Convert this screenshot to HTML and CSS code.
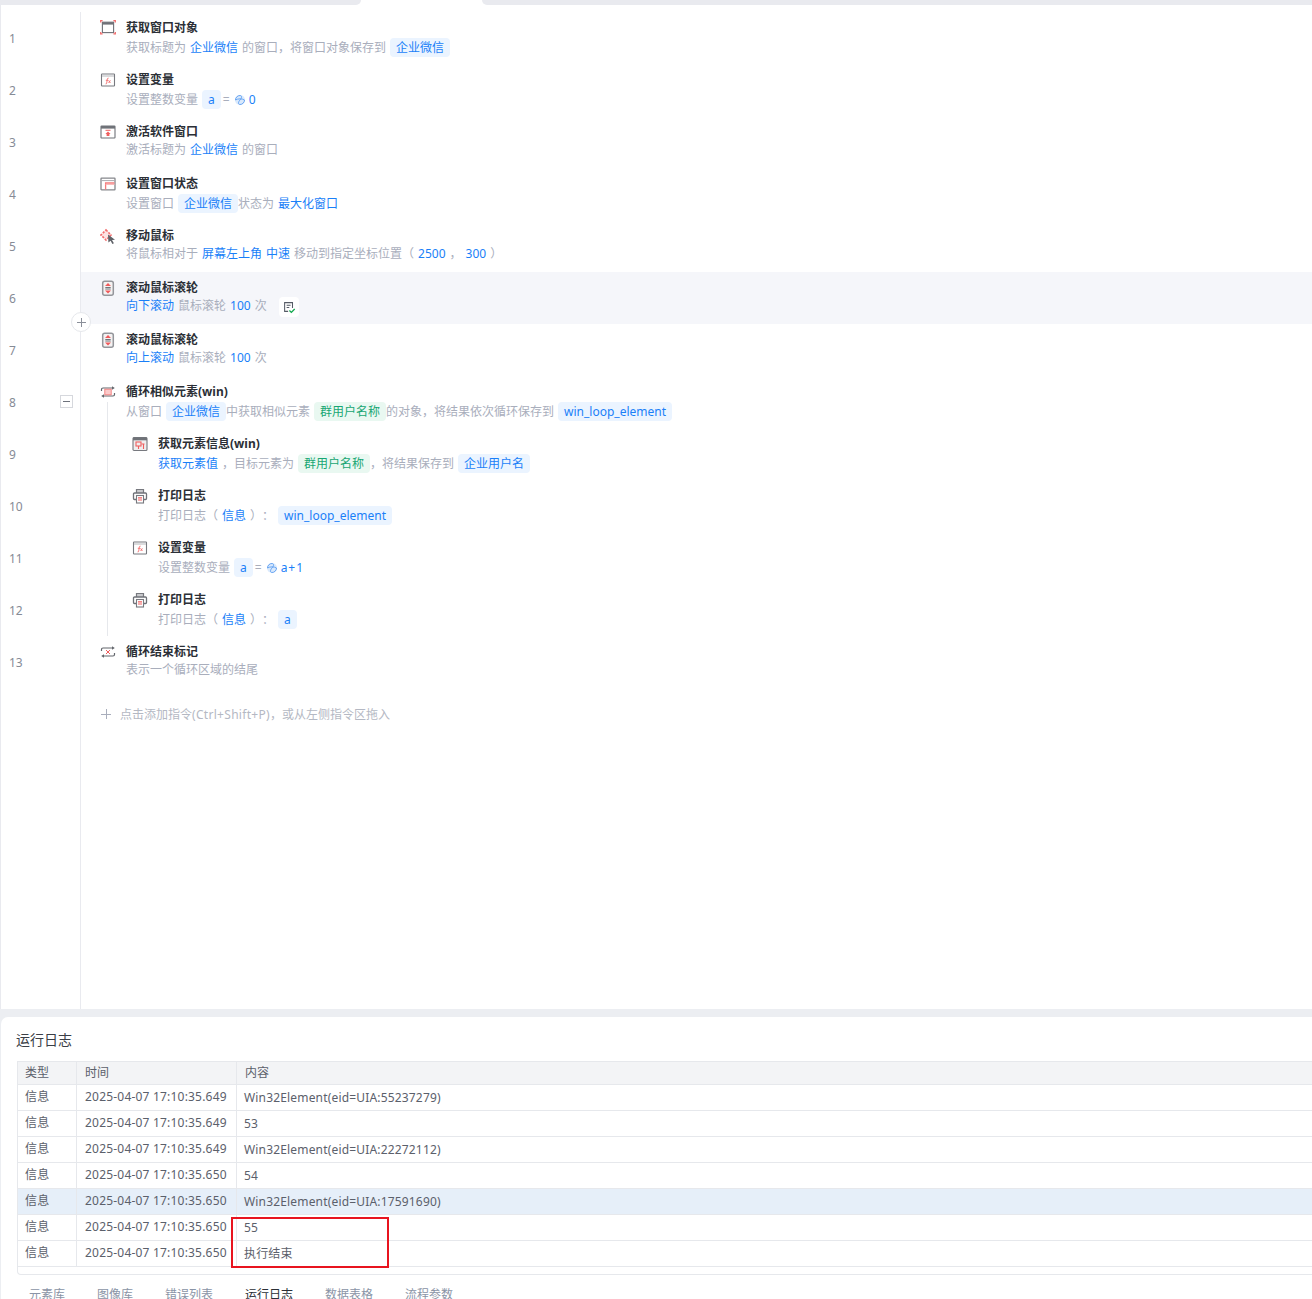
FILE: index.html
```html
<!DOCTYPE html>
<html lang="zh-CN">
<head>
<meta charset="utf-8">
<title>流程编辑器</title>
<link rel="stylesheet" href="styles.css">
</head>
<body>
<svg class="sprite" xmlns="http://www.w3.org/2000/svg">
  <symbol id="i-win" viewBox="0 0 16 16"><rect x="2.400" y="2.200" width="11.200" height="10.400" fill="none" stroke="#6f7278" stroke-width="1.100"/><rect x="2.400" y="2.200" width="11.200" height="2.400" fill="#6f7278"/><g fill="none" stroke="#f26d6d" stroke-width="1.300"><path d="M.7 2.600V.7h1.900M13.400 .7h1.900v1.900M.7 12v1.900h1.900M13.400 13.900h1.900V12"/></g></symbol>
  <symbol id="i-var" viewBox="0 0 16 16"><rect x="1.500" y="2" width="13" height="12" rx=".6" fill="none" stroke="#77797f" stroke-width="1.100"/><path d="M2 4h12" stroke="#b5b6ba" stroke-width="1"/><path d="M8.600 6.200c-1-.3-1.200.3-1.300 1l-.6 4c-.1.600-.5.900-1.100.7M5.800 8.300h2.400M8.600 8.400l1.800 2.600M10.400 8.400l-1.800 2.600" fill="none" stroke="#f26d6d" stroke-width=".9"/></symbol>
  <symbol id="i-act" viewBox="0 0 16 16"><rect x="1" y="2" width="14" height="12" rx=".6" fill="none" stroke="#6f7278" stroke-width="1.100"/><rect x="1" y="2" width="14" height="2.600" fill="#6f7278"/><path d="M5.500 6.300h5" stroke="#ef5f5f" stroke-width="1"/><path d="M8 7.400l2.600 2.600H9.400v2H6.600v-2H5.400z" fill="#ef5f5f"/></symbol>
  <symbol id="i-state" viewBox="0 0 16 16"><rect x="1" y="2.200" width="14" height="11.600" rx=".6" fill="none" stroke="#85878c" stroke-width="1.300"/><path d="M1.500 4.600h13" stroke="#a9abaf" stroke-width="1"/><path d="M5.600 13.400V7h8.800" fill="none" stroke="#f47c7c" stroke-width="1.300"/><path d="M5.600 8.400h8.800" stroke="#f9b4b4" stroke-width="1"/></symbol>
  <symbol id="i-move" viewBox="0 0 16 16"><path d="M6 2l5 5-5 5-5-5z" fill="#fde3e3" stroke="#f26d6d" stroke-width="1.600" stroke-dasharray="2.200 1.200"/><path d="M8 6.500l7 5.200-3 .4 1.900 3.200-1.500.7-1.800-3.300-2.200 1.800z" fill="#5f6268"/></symbol>
  <symbol id="i-wheel" viewBox="0 0 16 16"><rect x="2.700" y="1.200" width="10.600" height="14" rx="2" fill="#f4f2f2" stroke="#94969b" stroke-width="1.500"/><path d="M5.300 7.500h5.400M5.300 9h5.400" stroke="#63666c" stroke-width=".9"/><path d="M8 3l3 3H5zM8 13.500l3-3H5z" fill="#f0595a"/></symbol>
  <symbol id="i-loop" viewBox="0 0 16 16"><path d="M1.500 7V5.500a1.500 1.500 0 0 1 1.500-1.500h10M14.500 9v1.500A1.500 1.500 0 0 1 13 12H3" fill="none" stroke="#63666c" stroke-width="1.200"/><path d="M12 2.200l2.800 1.800-2.800 1.800zM4 10.200L1.200 12 4 13.800z" fill="#63666c"/><rect x="4.800" y="5.200" width="6.400" height="5.600" fill="#fbcaca" stroke="#f27c7c" stroke-width=".9"/></symbol>
  <symbol id="i-info" viewBox="0 0 16 16"><rect x="1" y="1.500" width="14" height="13" rx="1" fill="#efeeee" stroke="#77797f" stroke-width="1.100"/><rect x="1" y="1.500" width="14" height="2.800" fill="#6f7278"/><rect x="4" y="6" width="5" height="4" fill="none" stroke="#ef5f5f" stroke-width="1.100"/><path d="M6.500 10v3M9.500 8h3M11.500 8v5" stroke="#ef5f5f" stroke-width="1.100"/></symbol>
  <symbol id="i-print" viewBox="0 0 16 16"><path d="M4.500 5V1.500h7V5" fill="#c9cacd" stroke="#77797f" stroke-width="1.200"/><path d="M4 11.500H2.500a1 1 0 0 1-1-1V6a1 1 0 0 1 1-1h11a1 1 0 0 1 1 1v4.500a1 1 0 0 1-1 1H12" fill="none" stroke="#6f7278" stroke-width="1.300"/><rect x="4.500" y="7.500" width="7" height="7.500" fill="#fff" stroke="#77797f" stroke-width="1.100"/><path d="M6 9.800h4M6 12h4" stroke="#ef5f5f" stroke-width="1.200"/></symbol>
  <symbol id="i-end" viewBox="0 0 16 16"><path d="M1.500 7V5.500a1.500 1.500 0 0 1 1.500-1.500h10M14.500 9v1.500A1.500 1.500 0 0 1 13 12H3" fill="none" stroke="#63666c" stroke-width="1.200"/><path d="M12 2.200l2.800 1.800-2.800 1.800zM4 10.200L1.200 12 4 13.800z" fill="#63666c"/><path d="M6 6l4 4M10 6l-4 4" stroke="#ef5f5f" stroke-width="1"/></symbol>
  <symbol id="i-expr" viewBox="0 0 12 12"><circle cx="6" cy="6" r="5" fill="#d9e9fc"/><path d="M1.500 6a4.500 4.500 0 0 1 4.500-4.500c2 0 2 2.500 0 4.500s-2 4.500 0 4.500a4.500 4.500 0 0 0 4.500-4.500c-2-1.500-7-1.500-9 0z" fill="none" stroke="#5b9df0" stroke-width=".9"/></symbol>
  <symbol id="i-note" viewBox="0 0 16 16"><path d="M7 13H3V3h9v6" fill="none" stroke="#565b66" stroke-width="1.200"/><path d="M5.300 6h4.500M5.300 8.500h3" stroke="#565b66" stroke-width="1.200"/><path d="M8.500 12l2.200 2.200 3.800-4" fill="none" stroke="#12a84e" stroke-width="1.500"/></symbol>
</svg>

<div class="tabstrip"><div class="seg seg-left"></div><div class="seg-active"></div><div class="seg seg-right"></div></div>

<div class="editor">
  <div class="lines">
    <div class="line">1</div>
    <div class="line">2</div>
    <div class="line">3</div>
    <div class="line">4</div>
    <div class="line">5</div>
    <div class="line">6</div>
    <div class="line">7</div>
    <div class="line">8<span class="fold"></span></div>
    <div class="line">9</div>
    <div class="line">10</div>
    <div class="line">11</div>
    <div class="line">12</div>
    <div class="line">13</div>
  </div>
  <div class="main">
    <div class="row">
      <svg class="icon"><use href="#i-win"/></svg>
      <div class="txt"><div class="title">获取窗口对象</div>
      <div class="sub">获取标题为<span class="lk">企业微信</span>的窗口，将窗口对象保存到<span class="pill">企业微信</span></div></div>
    </div>
    <div class="row">
      <svg class="icon"><use href="#i-var"/></svg>
      <div class="txt"><div class="title">设置变量</div>
      <div class="sub">设置整数变量<span class="pill">a</span><span class="eq">=</span><svg class="expr"><use href="#i-expr"/></svg><span class="val">0</span></div></div>
    </div>
    <div class="row">
      <svg class="icon"><use href="#i-act"/></svg>
      <div class="txt"><div class="title">激活软件窗口</div>
      <div class="sub">激活标题为<span class="lk">企业微信</span>的窗口</div></div>
    </div>
    <div class="row">
      <svg class="icon"><use href="#i-state"/></svg>
      <div class="txt"><div class="title">设置窗口状态</div>
      <div class="sub">设置窗口<span class="pill">企业微信</span>状态为<span class="lk">最大化窗口</span></div></div>
    </div>
    <div class="row">
      <svg class="icon"><use href="#i-move"/></svg>
      <div class="txt"><div class="title">移动鼠标</div>
      <div class="sub">将鼠标相对于<span class="lk">屏幕左上角</span><span class="lk lk-next">中速</span>移动到指定坐标位置（<span class="lk">2500</span>，<span class="lk">300</span>）</div></div>
    </div>
    <div class="row row-active">
      <svg class="icon"><use href="#i-wheel"/></svg>
      <div class="txt"><div class="title">滚动鼠标滚轮</div>
      <div class="sub"><span class="lk lk-first">向下滚动</span>鼠标滚轮<span class="lk">100</span>次<span class="note"><svg class="note-icon"><use href="#i-note"/></svg></span></div></div>
      <button class="add" type="button"></button>
    </div>
    <div class="row">
      <svg class="icon"><use href="#i-wheel"/></svg>
      <div class="txt"><div class="title">滚动鼠标滚轮</div>
      <div class="sub"><span class="lk lk-first">向上滚动</span>鼠标滚轮<span class="lk">100</span>次</div></div>
    </div>
    <div class="row">
      <svg class="icon"><use href="#i-loop"/></svg>
      <div class="txt"><div class="title">循环相似元素(win)</div>
      <div class="sub">从窗口<span class="pill">企业微信</span>中获取相似元素<span class="pill pill-green">群用户名称</span>的对象，将结果依次循环保存到<span class="pill">win_loop_element</span></div></div>
    </div>
    <div class="nested">
      <div class="row">
        <svg class="icon"><use href="#i-info"/></svg>
        <div class="txt"><div class="title">获取元素信息(win)</div>
        <div class="sub"><span class="lk lk-first">获取元素值</span>，目标元素为<span class="pill pill-green">群用户名称</span>，将结果保存到<span class="pill">企业用户名</span></div></div>
      </div>
      <div class="row">
        <svg class="icon"><use href="#i-print"/></svg>
        <div class="txt"><div class="title">打印日志</div>
        <div class="sub">打印日志（<span class="lk">信息</span>）：<span class="pill">win_loop_element</span></div></div>
      </div>
      <div class="row">
        <svg class="icon"><use href="#i-var"/></svg>
        <div class="txt"><div class="title">设置变量</div>
        <div class="sub">设置整数变量<span class="pill">a</span><span class="eq">=</span><svg class="expr"><use href="#i-expr"/></svg><span class="val">a+1</span></div></div>
      </div>
      <div class="row">
        <svg class="icon"><use href="#i-print"/></svg>
        <div class="txt"><div class="title">打印日志</div>
        <div class="sub">打印日志（<span class="lk">信息</span>）：<span class="pill">a</span></div></div>
      </div>
    </div>
    <div class="row">
      <svg class="icon"><use href="#i-end"/></svg>
      <div class="txt"><div class="title">循环结束标记</div>
      <div class="sub">表示一个循环区域的结尾</div></div>
    </div>
    <div class="hint"><span class="hint-plus"></span><span>点击添加指令<span class="hint-key">(Ctrl+Shift+P)</span>，或从左侧指令区拖入</span></div>
  </div>
</div>

<div class="panel">
  <div class="panel-title">运行日志</div>
  <div class="log">
    <table class="log-table">
      <colgroup><col class="c1"><col class="c2"><col></colgroup>
      <thead><tr><th>类型</th><th>时间</th><th>内容</th></tr></thead>
      <tbody>
        <tr><td>信息</td><td>2025-04-07 17:10:35.649</td><td class="msg">Win32Element(eid=UIA:55237279)</td></tr>
        <tr><td>信息</td><td>2025-04-07 17:10:35.649</td><td class="msg">53</td></tr>
        <tr><td>信息</td><td>2025-04-07 17:10:35.649</td><td class="msg">Win32Element(eid=UIA:22272112)</td></tr>
        <tr><td>信息</td><td>2025-04-07 17:10:35.650</td><td class="msg">54</td></tr>
        <tr class="sel"><td>信息</td><td>2025-04-07 17:10:35.650</td><td class="msg">Win32Element(eid=UIA:17591690)</td></tr>
        <tr><td>信息</td><td>2025-04-07 17:10:35.650</td><td class="msg">55</td></tr>
        <tr><td>信息</td><td>2025-04-07 17:10:35.650</td><td class="msg">执行结束</td></tr>
      </tbody>
    </table>
    <div class="log-tail"></div>
    <div class="mark"></div>
  </div>
  <div class="bottom-tabs">
    <span class="btab">元素库</span><span class="btab">图像库</span><span class="btab">错误列表</span><span class="btab btab-on">运行日志</span><span class="btab">数据表格</span><span class="btab">流程参数</span>
  </div>
</div>
</body>
</html>
```

FILE: styles.css
```css
* { box-sizing: border-box; }
html, body { margin: 0; padding: 0; }
body {
  width: 1312px;
  height: 1299px;
  overflow: hidden;
  background: #fff;
  font-family: "Noto Sans", "Noto Sans CJK SC", sans-serif;
  font-size: 12px;
  color: #2b2f36;
  text-spacing-trim: space-all;
}
.sprite { display: none; }

.tabstrip { display: flex; height: 5px; }
.seg { background: #e9eaef; }
.seg-left { width: 361px; border-bottom-right-radius: 6px; }
.seg-active { width: 121px; background: #fff; }
.seg-right { flex: 1; border-bottom-left-radius: 6px; }

.editor {
  display: flex;
  height: 1004px;
  padding-top: 7px;
  border-left: 1px solid #e9eaef;
}
.lines { width: 80px; flex: none; border-right: 1px solid #e9eaef; }
.line {
  height: 52px;
  padding: 2px 7px 0 8px;
  display: flex;
  align-items: center;
  justify-content: space-between;
  color: #868b96;
  line-height: 18px;
}
.fold {
  position: relative;
  width: 13px;
  height: 13px;
  margin-bottom: 4px;
  border: 1px solid #d6d8dd;
  background: #fff;
}
.fold::after {
  content: "";
  position: absolute;
  left: 2px;
  top: 5px;
  width: 7px;
  height: 1px;
  background: #6e727c;
}

.main { flex: 1; min-width: 0; }
.row {
  position: relative;
  display: flex;
  height: 52px;
  padding: 7px 0 0 19px;
  gap: 10px;
}
.row-active { background: #f5f6fa; }
.icon { width: 16px; height: 16px; flex: none; margin-top: 1px; }
.title { height: 18px; line-height: 18px; font-weight: 700; color: #2b2f36; }
.sub {
  display: flex;
  align-items: center;
  min-height: 18px;
  line-height: 18px;
  white-space: nowrap;
  color: #a9aebc;
}
.lk { margin: 0 4px; color: #1a7ff8; }
.lk-first { margin-left: 0; }
.lk-next { margin-left: 0; }
.pill {
  height: 19px;
  margin: 1px 0 1px 4px;
  padding: 0 6px;
  line-height: 19px;
  border-radius: 4px;
  background: #ebf4ff;
  color: #1a7ff8;
}
.pill-green { background: #e9f8f1; color: #17a673; }
.eq { margin: 0 4px 0 2px; }
.expr { width: 12px; height: 12px; margin-right: 3px; }
.val { color: #1a7ff8; letter-spacing: 1px; }
.note {
  display: flex;
  align-items: center;
  justify-content: center;
  width: 20px;
  height: 20px;
  margin: 0 0 -2px 12px;
  border-radius: 4px;
  background: #fff;
}
.note-icon { width: 14px; height: 14px; }
.add {
  position: absolute;
  left: -10px;
  bottom: -8px;
  z-index: 2;
  width: 20px;
  height: 20px;
  padding: 0;
  border: 1px solid #e6e8ec;
  border-radius: 50%;
  background: #fff;
}
.add::before, .add::after, .hint-plus::before, .hint-plus::after {
  content: "";
  position: absolute;
  background: #8a8f99;
}
.add::before { left: 5px; top: 9px; width: 9px; height: 1px; }
.add::after { left: 9px; top: 5px; width: 1px; height: 9px; }

.nested {
  position: relative;
  margin-left: 26px;
  padding-left: 1px;
}
.nested::before {
  content: "";
  position: absolute;
  left: 0;
  top: -26px;
  bottom: 0;
  width: 1px;
  background: #e6e8ec;
}
.nested .row { padding-left: 24px; }

.hint {
  display: flex;
  align-items: center;
  height: 18px;
  margin: 17px 0 0 20px;
  color: #b4b8c3;
}
.hint-key { letter-spacing: .3px; }
.hint-plus { position: relative; width: 10px; height: 10px; margin-right: 9px; }
.hint-plus::before { left: 0; top: 4.5px; width: 10px; height: 1px; background: #a9aebc; }
.hint-plus::after { left: 4.5px; top: 0; width: 1px; height: 10px; background: #a9aebc; }

.panel {
  height: 290px;
  padding: 8px 0 0;
  background: #eceef2;
}
.panel-title {
  margin-left: 1px;
  padding: 13px 0 0 15px;
  height: 44px;
  font-size: 14px;
  line-height: 20px;
  color: #3a3e46;
  background: #fff;
  border-top-left-radius: 7px;
}
.log {
  position: relative;
  margin: 0 -12px 0 1px;
  background: #fff;
}
.log-table {
  width: 1307px;
  margin-left: 16px;
  table-layout: fixed;
  border-collapse: separate;
  border-spacing: 0;
  border-top: 1px solid #e6e8ec;
  border-left: 1px solid #e6e8ec;
  color: #5b606b;
}
.c1 { width: 59px; }
.c2 { width: 160px; }
.log-table th, .log-table td {
  padding: 0 0 0 7px;
  border-right: 1px solid #e6e8ec;
  border-bottom: 1px solid #e6e8ec;
  text-align: left;
  font-weight: 400;
  white-space: nowrap;
}
.log-table th { height: 23px; padding-bottom: 2px; background: #f3f4f6; }
.log-table th + th { padding-left: 8px; }
.log-table td { height: 26px; padding-bottom: 3px; letter-spacing: .2px; }
.log-table td.msg { padding: 0 0 1px 7px; letter-spacing: .17px; }
.log-table td:nth-child(2) { padding-left: 8px; }
.sel td { background: #e6eff9; }
.log-tail {
  height: 8px;
  margin-left: 16px;
  border: 1px solid #e6e8ec;
  border-top: 0;
  border-radius: 0 0 4px 4px;
}
.mark {
  position: absolute;
  left: 230px;
  top: 156px;
  width: 158px;
  height: 51px;
  border: 2px solid #e8141f;
}
.bottom-tabs {
  display: flex;
  gap: 32px;
  margin-left: 1px;
  padding: 11px 0 0 28px;
  height: 40px;
  line-height: 18px;
  background: #fff;
  color: #8a94a6;
}
.btab-on { color: #2b2f36; }
```
